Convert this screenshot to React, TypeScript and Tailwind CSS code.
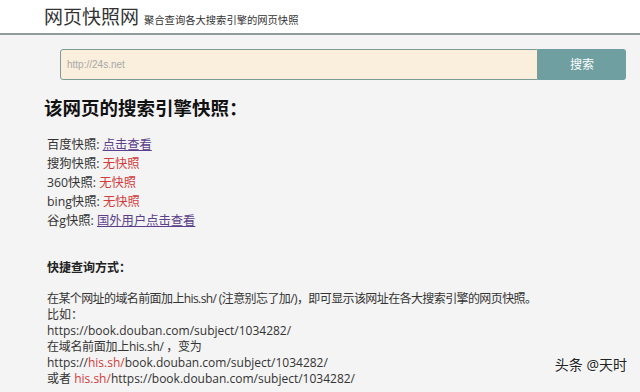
const cjk = "font-['Open_Sans','Noto_Sans_CJK_SC',sans-serif]";

export default function App() {
  return (
    <div className={`relative min-h-[392px] w-[640px] bg-[#f4f4f4] text-[#333] ${cjk}`}>
      <header className="flex h-[35px] items-end gap-[5px] border-b-2 border-[#8e9c9c] bg-white pb-[5px] pl-[44px]">
        <h1 className="text-[19px] leading-[22px] text-[#333]">网页快照网</h1>
        <span className="pb-[2px] text-[10.3px] leading-[12px] text-[#333]">聚合查询各大搜索引擎的网页快照</span>
      </header>

      <form className="ml-[60px] mt-[14px] flex h-[31px] w-[566px]">
        <input
          className="h-full flex-1 rounded-l-[3px] border border-[#7c9a96] bg-[#faefdc] px-[6px] font-['Liberation_Sans',sans-serif] text-[10px] text-[#999] outline-none placeholder:text-[#a8a8a8]"
          placeholder="http://24s.net"
        />
        <button
          type="button"
          className="h-full w-[88px] rounded-r-[3px] bg-[#6f9fa0] text-[12px] text-white"
        >
          搜索
        </button>
      </form>

      <h2 className="ml-[44px] mt-[16px] text-[18.5px] font-bold leading-[24px] text-[#111]">
        该网页的搜索引擎快照：
      </h2>

      <ul className="ml-[47px] mt-[15px] text-[12.3px] leading-[19px] text-[#333]">
        <li>
          百度快照: <a className="text-[#5b3f8a] underline" href="#">点击查看</a>
        </li>
        <li>
          搜狗快照: <span className="text-[#d23c3c]">无快照</span>
        </li>
        <li>
          360快照: <span className="text-[#d23c3c]">无快照</span>
        </li>
        <li>
          bing快照: <span className="text-[#d23c3c]">无快照</span>
        </li>
        <li>
          谷g快照: <a className="text-[#5b3f8a] underline" href="#">国外用户点击查看</a>
        </li>
      </ul>

      <h3 className="ml-[47px] mt-[30px] text-[12px] font-bold leading-[16px] text-[#222]">
        快捷查询方式：
      </h3>

      <div className="ml-[47px] mt-[15px] text-[12px] leading-[16px] text-[#333]">
        <p className="tracking-[-0.6px]">
          在某个网址的域名前面加上his.sh/ (注意别忘了加/)，即可显示该网址在各大搜索引擎的网页快照。
        </p>
        <p>比如：</p>
        <p>https://book.douban.com/subject/1034282/</p>
        <p className="tracking-[-0.3px]">在域名前面加上his.sh/ ，变为</p>
        <p>
          https://<span className="text-[#d23c3c]">his.sh/</span>book.douban.com/subject/1034282/
        </p>
        <p>
          或者 <span className="text-[#d23c3c]">his.sh/</span>https://book.douban.com/subject/1034282/
        </p>
      </div>

      <span className="absolute right-[13px] top-[356px] text-[14px] leading-[18px] text-[#222] [text-shadow:1px_1px_0_#fff]">
        头条 @天时
      </span>
    </div>
  );
}
